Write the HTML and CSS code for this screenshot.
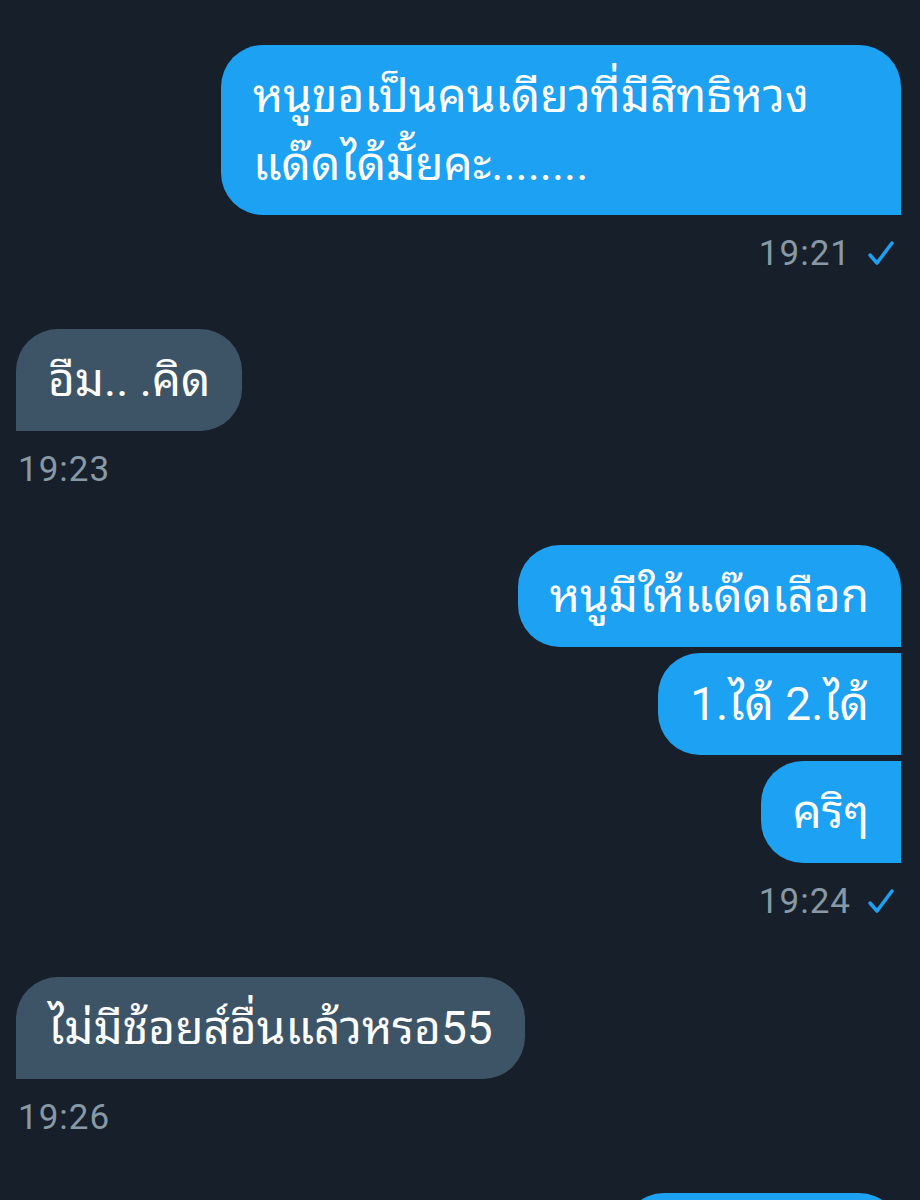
FILE: index.html
```html
<!DOCTYPE html>
<html lang="th">
<head>
    <meta charset="UTF-8">
    <meta name="viewport" content="width=device-width, initial-scale=1.0">
    <title>Messages</title>
    <link rel="stylesheet" href="styles.css">
</head>
<body>
    <main class="chat">
        <div class="group out">
            <div class="bubble">หนูขอเป็นคนเดียวที่มีสิทธิหวงแด๊ดได้มั้ยคะ........</div>
            <div class="meta">19:21
                <svg class="tick" viewBox="0 0 26 26"><polyline points="2,15 9,23 24,3"/></svg>
            </div>
        </div>

        <div class="group in">
            <div class="bubble">อืม.. .คิด</div>
            <div class="meta">19:23</div>
        </div>

        <div class="group out">
            <div class="bubble">หนูมีให้แด๊ดเลือก</div>
            <div class="bubble">1.ได้ 2.ได้</div>
            <div class="bubble">คริๆ</div>
            <div class="meta">19:24
                <svg class="tick" viewBox="0 0 26 26"><polyline points="2,15 9,23 24,3"/></svg>
            </div>
        </div>

        <div class="group in">
            <div class="bubble">ไม่มีช้อยส์อื่นแล้วหรอ55</div>
            <div class="meta">19:26</div>
        </div>

        <!-- next message, cut off by the bottom of the screen -->
        <div class="group out">
            <div class="bubble cut"></div>
        </div>
    </main>
</body>
</html>
```

FILE: styles.css
```css
html, body {
    margin: 0;
    height: 100%;
    overflow: hidden;
}

body {
    background: #17202a;
    font-family: Roboto, "Noto Sans Thai Looped", Loma, Garuda, "Noto Sans Thai", "Noto Sans", sans-serif;
    color: #ffffff;
}

.chat {
    display: flex;
    flex-direction: column;
    gap: 56px;
    padding: 45px 19px 0 16px;
}

.group {
    display: flex;
    flex-direction: column;
    gap: 6px;
}

.group.out {
    align-items: flex-end;
}

.group.in {
    align-items: flex-start;
}

.bubble {
    max-width: 616px;
    padding: 17px 32px;
    font-size: 46px;
    line-height: 68px;
    min-height: 68px;
}

.out .bubble {
    background: #1da1f2;
    border-radius: 42px 42px 0 42px;
}

/* bubbles after the first in a run sit flush on the right */
.out .bubble + .bubble {
    border-radius: 42px 0 0 42px;
}

.in .bubble {
    background: #3d5466;
    border-radius: 42px 42px 42px 0;
}

.bubble.cut {
    width: 215px;
}

.meta {
    display: flex;
    align-items: center;
    gap: 17px;
    margin-top: 12px;
    height: 40px;
    font-size: 35px;
    letter-spacing: 1px;
    color: #8899a6;
}

.out .meta {
    padding-right: 7px;
}

.in .meta {
    padding-left: 2px;
}

.tick {
    width: 26px;
    height: 26px;
    fill: none;
    stroke: #1da1f2;
    stroke-width: 3.5;
    stroke-linecap: round;
    stroke-linejoin: round;
}
```
